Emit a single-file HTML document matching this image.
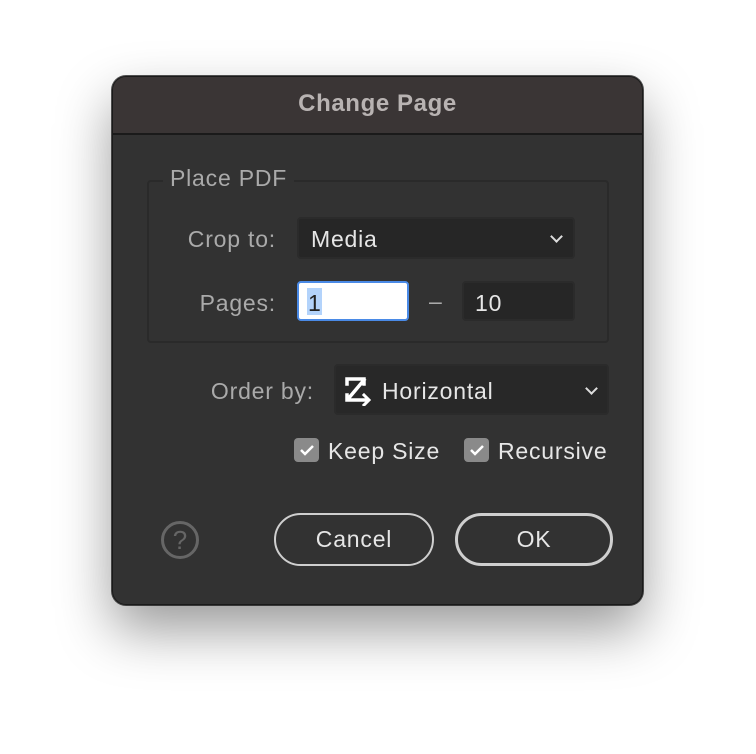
<!DOCTYPE html>
<html><head><style>
body{margin:0;width:756px;height:754px;background:#fff;position:relative;overflow:hidden;font-family:"Liberation Sans",sans-serif}
.dlg{position:absolute;left:112px;top:76px;width:531px;height:529px;background:#323232;border-radius:14px;border:1px solid #1a1a1a;box-sizing:border-box;box-shadow:0 25px 55px rgba(0,0,0,.4),0 0 0 1px #555;overflow:hidden}
.title{height:56px;background:#3a3535;border-bottom:2px solid #1a1a1a;text-align:center;line-height:54px;color:#b8b3b2;font-weight:bold;font-size:24px;letter-spacing:.6px}
.a{position:absolute;color:#aaa;font-size:23px;letter-spacing:.8px;white-space:nowrap}
.r{text-align:right}
.w{color:#e6e6e6}
.box{position:absolute;background:#262626;border:2px solid #2b2b2b;border-radius:4px;box-sizing:border-box}
.chev{position:absolute;width:7px;height:7px;border-right:2px solid #ddd;border-bottom:2px solid #ddd;transform:rotate(45deg)}
.cb{position:absolute;width:25px;height:24px;background:#8a8a8a;border-radius:4px}
.btn{position:absolute;border:2px solid #cfcfcf;border-radius:27px;box-sizing:border-box;color:#e6e6e6;font-size:23px;letter-spacing:.8px;text-align:center}
</style></head><body>
<div class="dlg"><div class="title">Change Page</div></div>
<div style="position:absolute;left:147px;top:180px;width:462px;height:163px;border:2px solid #2a2a2a;border-radius:4px;box-sizing:border-box"></div>
<div class="a" style="left:163px;top:165px;background:#323232;padding:0 7px">Place PDF</div>
<div class="a r" style="left:100px;width:176px;top:226px">Crop to:</div>
<div class="box" style="left:297px;top:217px;width:278px;height:42px"></div>
<div class="a w" style="left:311px;top:226px">Media</div>
<div class="chev" style="left:552px;top:232px"></div>
<div class="a r" style="left:100px;width:176px;top:290px">Pages:</div>
<div style="position:absolute;left:297px;top:281px;width:112px;height:40px;background:#fff;border:2px solid #4a8ae6;border-radius:4px;box-sizing:border-box"></div>
<div style="position:absolute;left:307px;top:288px;width:15px;height:27px;background:#b3d3fb"></div>
<div class="a" style="left:308px;top:290px;color:#222">1</div>
<div class="a" style="left:429px;top:288px">–</div>
<div class="box" style="left:462px;top:281px;width:113px;height:40px"></div>
<div class="a w" style="left:475px;top:290px">10</div>
<div class="a r" style="left:150px;width:164px;top:378px">Order by:</div>
<div class="box" style="left:334px;top:364px;width:275px;height:51px;background:#282828"></div>
<svg style="position:absolute;left:344px;top:376px" width="28" height="30" viewBox="0 0 28 30"><g stroke="#fff" stroke-width="3.5" fill="none" stroke-linecap="square"><path d="M3 3H20M3 3v5M20 3v5M20 4L4 23M3 24H22M3 24v-5"/><path d="M20 19l5 5-5 5" stroke-width="3"/></g></svg>
<div class="a w" style="left:382px;top:378px">Horizontal</div>
<div class="chev" style="left:587px;top:384px"></div>
<div class="cb" style="left:294px;top:438px"></div>
<svg style="position:absolute;left:294px;top:438px" width="25" height="24"><path d="M7 12l4 4 8-8" stroke="#fff" stroke-width="2.5" fill="none"/></svg>
<div class="a w" style="left:328px;top:438px">Keep Size</div>
<div class="cb" style="left:464px;top:438px"></div>
<svg style="position:absolute;left:464px;top:438px" width="25" height="24"><path d="M7 12l4 4 8-8" stroke="#fff" stroke-width="2.5" fill="none"/></svg>
<div class="a w" style="left:498px;top:438px">Recursive</div>
<div style="position:absolute;left:161px;top:521px;width:38px;height:38px;border:3px solid #666;border-radius:50%;box-sizing:border-box;color:#666;font-size:26px;text-align:center;line-height:33px">?</div>
<div class="btn" style="left:274px;top:513px;width:160px;height:53px;line-height:49px">Cancel</div>
<div class="btn" style="left:455px;top:513px;width:158px;height:53px;line-height:47px;border-width:3px">OK</div>
</body></html>
